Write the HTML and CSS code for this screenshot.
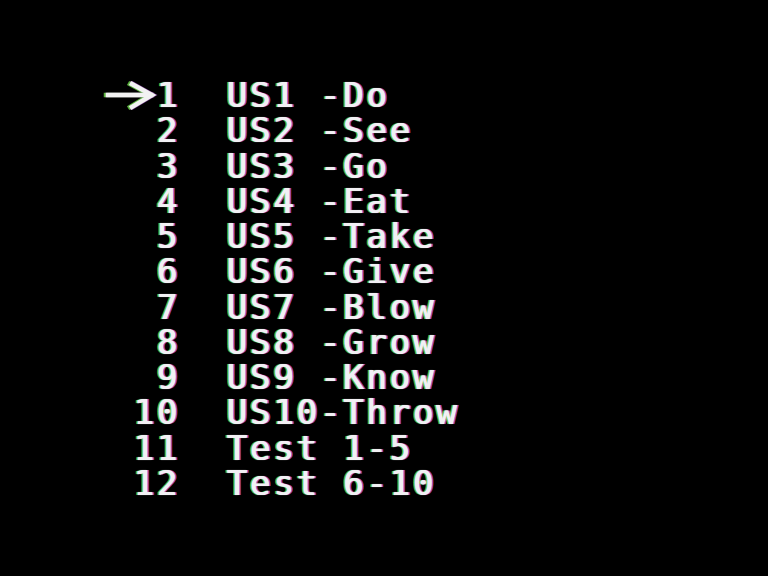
FILE: index.html
```html
<!DOCTYPE html>
<html>
<head>
<meta charset="utf-8">
<link rel="stylesheet" href="styles.css">
</head>
<body>
<div class="screen">
<pre class="menu"><span class="arrow"><svg width="46" height="35" viewBox="0 0 46 35"><g fill="none" stroke="#f2f2f2" stroke-width="4.5" stroke-linecap="square" stroke-linejoin="miter"><path d="M-2 17 H41"/><path d="M22 6 L42 17 L22 29"/></g></svg></span>1  US1 -Do
  2  US2 -See
  3  US3 -Go
  4  US4 -Eat
  5  US5 -Take
  6  US6 -Give
  7  US7 -Blow
  8  US8 -Grow
  9  US9 -Know
 10  US10-Throw
 11  Test 1-5
 12  Test 6-10</pre>
</div>
</body>
</html>
```
FILE: styles.css
```css
html, body {
  margin: 0;
  padding: 0;
  background: #000;
  width: 768px;
  height: 576px;
  overflow: hidden;
}
.screen {
  padding: 78px 0 0 110px;
}
.menu {
  margin: 0;
  font-family: "DejaVu Sans Mono", monospace;
  font-weight: normal;
  font-size: 34px;
  letter-spacing: 2.8px;
  line-height: 35.25px;
  color: #f2f0f4;
  text-shadow: 1px 0 #f2f0f4, -1.5px 0 rgba(110, 230, 70, 0.8), 2.5px 0 rgba(190, 90, 230, 0.85), 0 0 1px rgba(255,255,255,0.6);
}
.arrow {
  display: inline-block;
  width: 46.54px;
  height: 35px;
  vertical-align: top;
  filter: drop-shadow(-1.5px 0 rgba(110, 230, 70, 0.75)) drop-shadow(1.5px 0 rgba(190, 90, 230, 0.6));
}
.arrow svg {
  display: block;
  overflow: visible;
}
```
